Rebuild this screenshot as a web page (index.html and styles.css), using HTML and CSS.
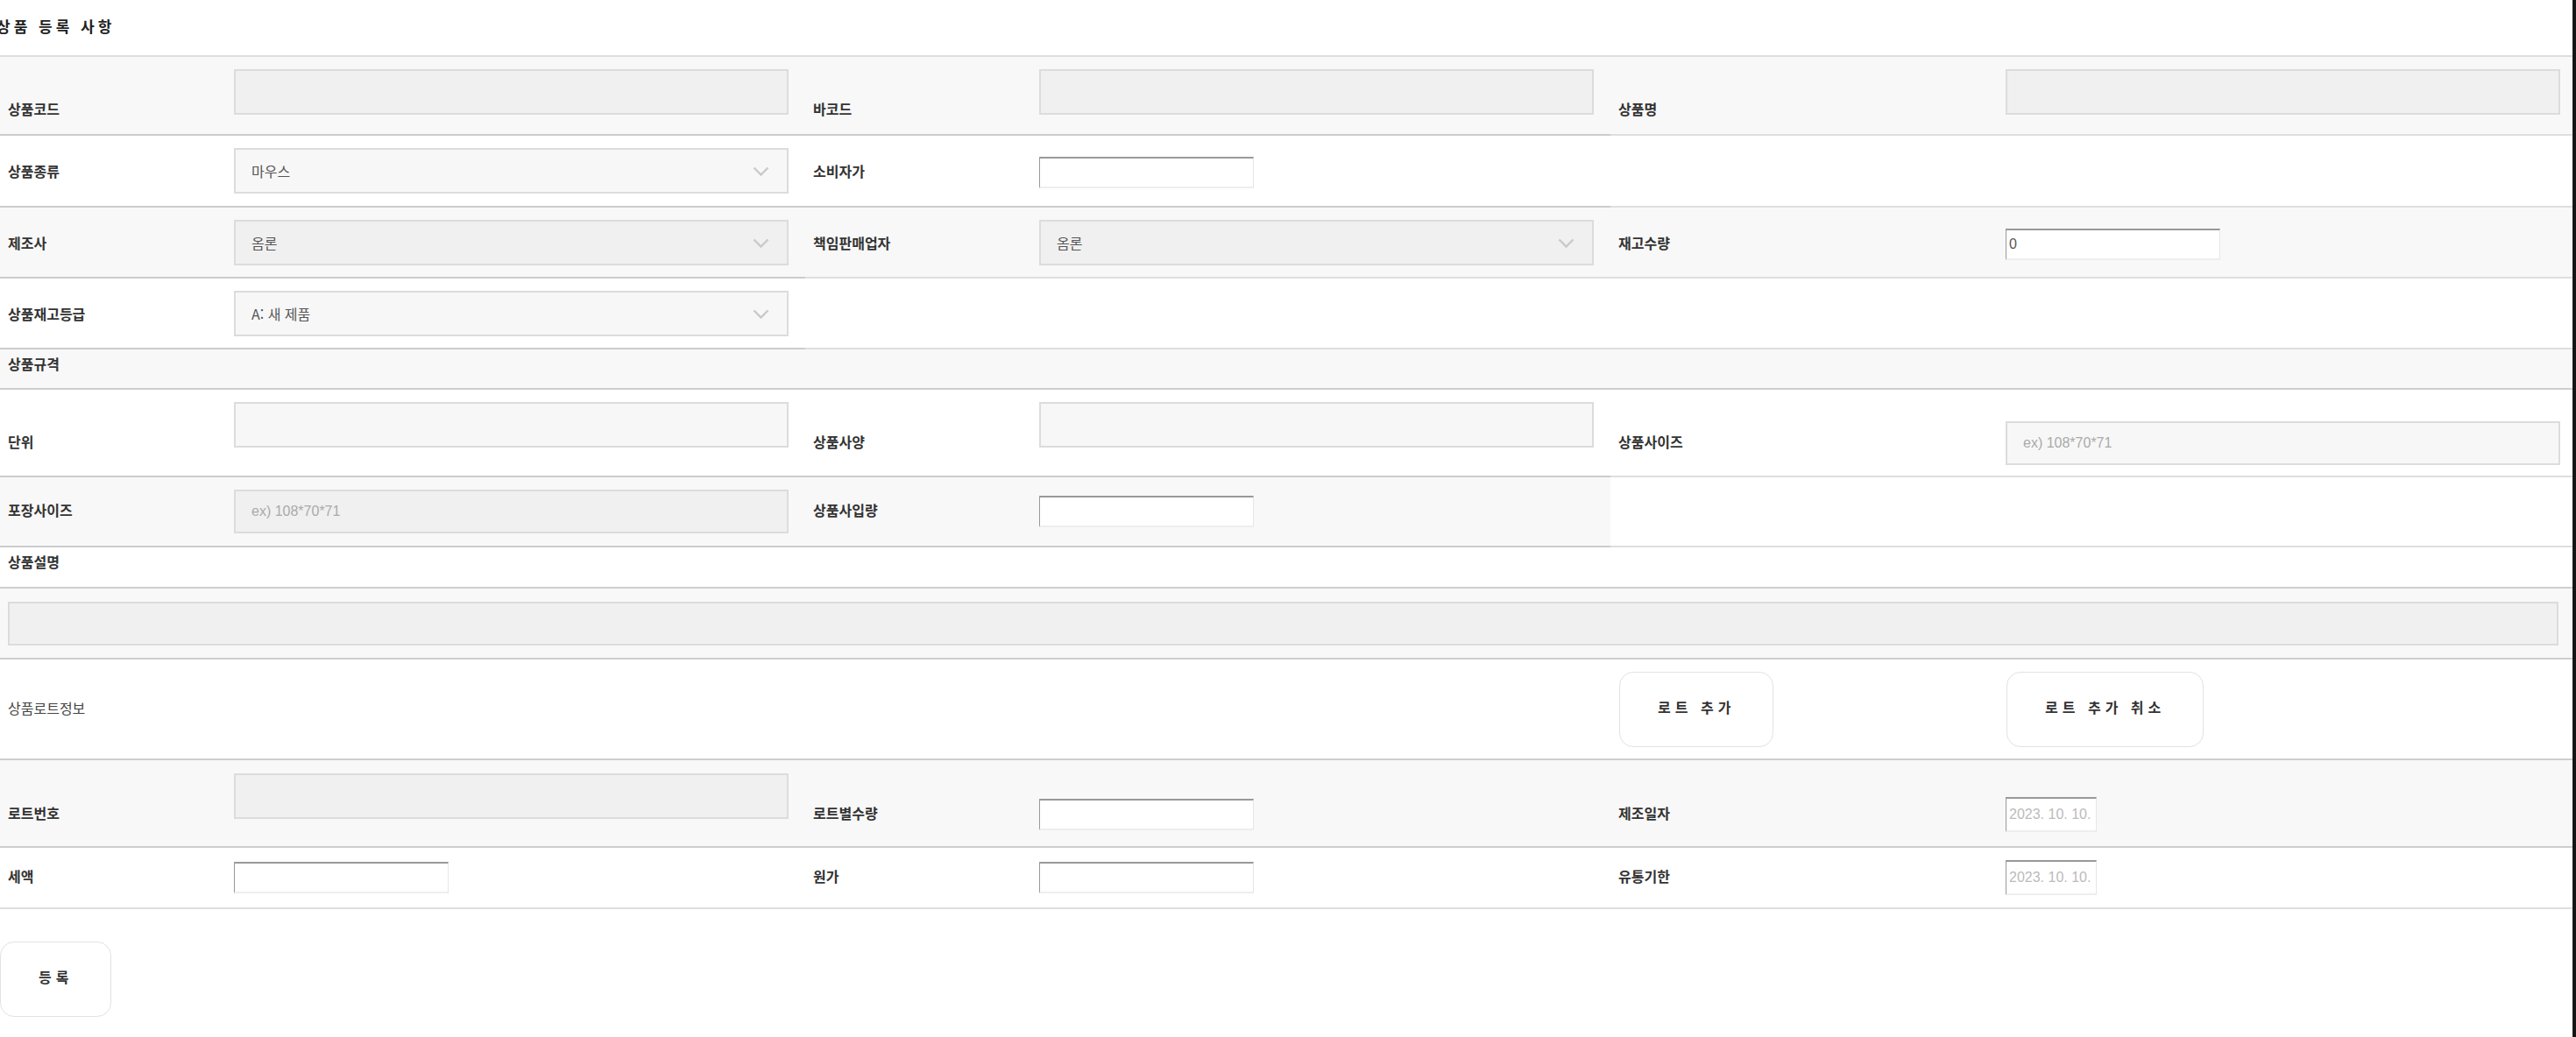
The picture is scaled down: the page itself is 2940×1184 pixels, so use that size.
FILE: index.html
```html
<!DOCTYPE html>
<html lang="ko">
<head>
    <meta charset="UTF-8">
    <meta name="viewport" content="width=device-width, initial-scale=1.0">
    <title>상품 등록</title>
    <link rel="stylesheet" href="styles.css">
</head>
<body>
    <div class="page">
        <h1 class="title">상품 등록 사항</h1>

        <div class="form">
            <div class="row grey split-wide h90">
                <div class="cell label">상품코드</div>
                <div class="cell"><span class="box"></span></div>
                <div class="cell label">바코드</div>
                <div class="cell"><span class="box"></span></div>
                <div class="cell label">상품명</div>
                <div class="cell"><span class="box"></span></div>
            </div>

            <div class="row split-wide h82">
                <div class="cell label">상품종류</div>
                <div class="cell">
                    <div class="select"><span>마우스</span><svg class="chev" viewBox="0 0 19 11"><polyline points="1.5,1.5 9.5,9.5 17.5,1.5"/></svg></div>
                </div>
                <div class="cell label">소비자가</div>
                <div class="cell"><input class="num" type="text"></div>
            </div>

            <div class="row grey split-half h81">
                <div class="cell label">제조사</div>
                <div class="cell">
                    <div class="select"><span>옴론</span><svg class="chev" viewBox="0 0 19 11"><polyline points="1.5,1.5 9.5,9.5 17.5,1.5"/></svg></div>
                </div>
                <div class="cell label">책임판매업자</div>
                <div class="cell">
                    <div class="select"><span>옴론</span><svg class="chev" viewBox="0 0 19 11"><polyline points="1.5,1.5 9.5,9.5 17.5,1.5"/></svg></div>
                </div>
                <div class="cell label">재고수량</div>
                <div class="cell"><input class="num" type="text" value="0"></div>
            </div>

            <div class="row split-half h81">
                <div class="cell label">상품재고등급</div>
                <div class="cell">
                    <div class="select"><span>A: 새 제품</span><svg class="chev" viewBox="0 0 19 11"><polyline points="1.5,1.5 9.5,9.5 17.5,1.5"/></svg></div>
                </div>
            </div>

            <div class="row grey head h46">
                <div class="cell label full">상품규격</div>
            </div>

            <div class="row split-wide h100">
                <div class="cell label">단위</div>
                <div class="cell"><span class="box"></span></div>
                <div class="cell label">상품사양</div>
                <div class="cell"><span class="box"></span></div>
                <div class="cell label">상품사이즈</div>
                <div class="cell"><input class="text" type="text" placeholder="ex) 108*70*71"></div>
            </div>

            <div class="row grey-part split-wide h80">
                <div class="cell label">포장사이즈</div>
                <div class="cell"><input class="text" type="text" placeholder="ex) 108*70*71"></div>
                <div class="cell label">상품사입량</div>
                <div class="cell"><input class="num" type="text"></div>
            </div>

            <div class="row head h47">
                <div class="cell label full">상품설명</div>
            </div>

            <div class="row grey pt15 h81">
                <div class="cell full wide-cell"><span class="box wide"></span></div>
            </div>

            <div class="row lot h115">
                <div class="cell sub">상품로트정보</div>
                <div class="cell at5"><button class="btn">로트 추가</button></div>
                <div class="cell at6"><button class="btn">로트 추가 취소</button></div>
            </div>

            <div class="row grey pt15 h100">
                <div class="cell label">로트번호</div>
                <div class="cell"><span class="box"></span></div>
                <div class="cell label">로트별수량</div>
                <div class="cell"><input class="num" type="text"></div>
                <div class="cell label">제조일자</div>
                <div class="cell"><input class="num date" type="text" placeholder="2023. 10. 10."></div>
            </div>

            <div class="row light h70">
                <div class="cell label">세액</div>
                <div class="cell"><input class="num" type="text"></div>
                <div class="cell label">원가</div>
                <div class="cell"><input class="num" type="text"></div>
                <div class="cell label">유통기한</div>
                <div class="cell"><input class="num date" type="text" placeholder="2023. 10. 10."></div>
            </div>
        </div>

        <div class="actions">
            <button class="btn">등록</button>
        </div>
    </div>
    <div class="edge"></div>
</body>
</html>
```

FILE: styles.css
```css
body {
    margin: 0;
    display: flex;
    min-height: 100vh;
    font-family: "Noto Sans CJK KR", sans-serif;
    color: #333;
    background-color: #fff;
}
.page {
    flex: 1;
}
.edge {
    width: 4px;
    background-color: #151515;
}
.title {
    margin: 0 0 0 -4px;
    padding: 18px 0 21px;
    font-size: 17px;
    line-height: 24px;
    letter-spacing: 4px;
    font-weight: 700;
    color: #222;
}
.form {
    border-top: 2px solid #dedede;
}
.row {
    display: grid;
    grid-template-columns: 258px 661px 258px 661px 442px 1fr;
    align-items: baseline;
    box-sizing: border-box;
    padding-top: 14px;
    border-bottom: 2px solid #cecece;
}
.h46 { height: 46px; }
.h47 { height: 47px; }
.h70 { height: 70px; }
.h80 { height: 80px; }
.h81 { height: 81px; }
.h82 { height: 82px; }
.h90 { height: 90px; }
.h100 { height: 100px; }
.h115 { height: 115px; }
.pt15 {
    padding-top: 15px;
}
.head {
    padding-top: 4px;
}
.grey {
    background-color: #f8f8f8;
}
.grey-part {
    background: linear-gradient(to right, #f8f8f8 1838px, #fff 1838px);
}
.split-wide {
    border-image: linear-gradient(to right, #cccccc 1838px, #dedede 1838px) 1;
}
.split-half {
    border-image: linear-gradient(to right, #cccccc 919px, #dedede 919px) 1;
}
.light {
    border-bottom-color: #dedede;
}
.cell {
    padding: 0 9px;
    font-size: 16px;
    line-height: 24px;
}
.label {
    font-weight: 700;
    color: #333;
}
.full {
    grid-column: 1 / -1;
}
.wide-cell {
    padding-right: 16px;
}
.box {
    display: inline-block;
    vertical-align: baseline;
    width: 633px;
    height: 52px;
    box-sizing: border-box;
    border: 2px solid #dcdcdc;
    background-color: rgba(0, 0, 0, 0.03);
}
.box.wide {
    display: block;
    width: 100%;
    height: 50px;
}
.select {
    display: inline-flex;
    align-items: center;
    justify-content: space-between;
    vertical-align: baseline;
    width: 633px;
    height: 52px;
    box-sizing: border-box;
    padding: 0 20px 0 18px;
    border: 2px solid #dcdcdc;
    background-color: rgba(0, 0, 0, 0.03);
    color: #555;
}
.chev {
    width: 19px;
    height: 11px;
    fill: none;
    stroke: #c9c9c9;
    stroke-width: 2.4;
}
.text {
    width: 633px;
    height: 50px;
    box-sizing: border-box;
    margin: 0;
    padding: 0 18px;
    border: 2px solid #dcdcdc;
    background-color: rgba(0, 0, 0, 0.03);
    font: 16px "Liberation Sans", "Noto Sans CJK KR", sans-serif;
    color: #555;
    outline: none;
}
.text::placeholder {
    color: #aaa;
}
.num {
    width: 245px;
    height: 36px;
    box-sizing: border-box;
    margin: 0;
    padding: 0 3px;
    background-color: #fff;
    border-style: solid;
    border-width: 2px 1px 2px 1px;
    border-color: #999 #e6e6e6 #eee #999;
    font: 16px "Liberation Sans", "Noto Sans CJK KR", sans-serif;
    color: #555;
    outline: none;
}
.date {
    width: 104px;
    height: 40px;
}
.date::placeholder {
    color: #bbb;
}
.lot {
    align-items: center;
    padding-top: 0;
}
.sub {
    padding-bottom: 4px;
    color: #444;
}
.at5 {
    grid-column: 5;
    padding-left: 10px;
}
.at6 {
    grid-column: 6;
    padding-left: 10px;
}
.btn {
    display: block;
    height: 86px;
    padding: 0 43px 6px;
    border: 1px solid #e2e2e2;
    border-radius: 16px;
    background-color: #fff;
    font-family: "Noto Sans CJK KR", sans-serif;
    font-size: 16px;
    font-weight: 700;
    letter-spacing: 5px;
    color: #333;
    cursor: pointer;
}
.actions {
    padding-top: 37px;
}
```
